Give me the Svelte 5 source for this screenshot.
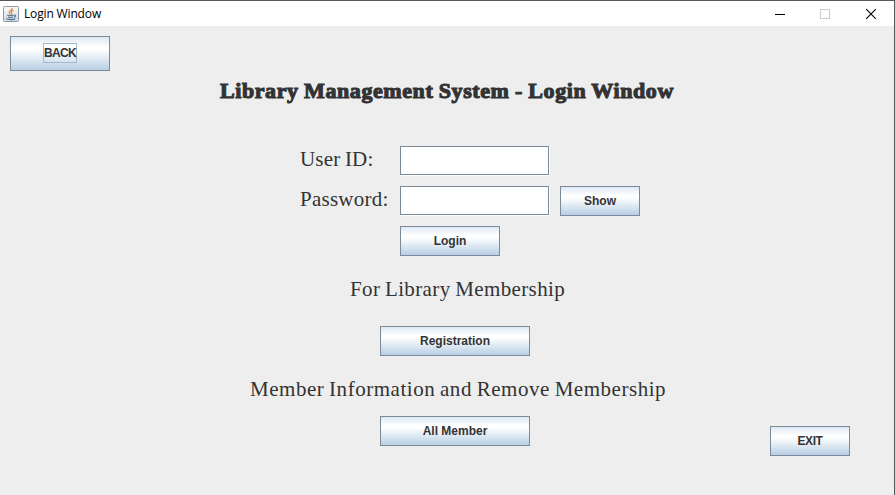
<script>
  let userId = $state('');
  let password = $state('');
  let shown = $state(false);
</script>

<div class="window">
  <header>
    <svg class="java" width="16" height="16" viewBox="0 0 16 16">
      <defs>
        <linearGradient id="plate" x1="0" y1="0" x2="0" y2="1">
          <stop offset="0" stop-color="#fafafa" />
          <stop offset="1" stop-color="#cfd8df" />
        </linearGradient>
      </defs>
      <rect x="0.5" y="0.5" width="15" height="15" rx="1" fill="url(#plate)" stroke="#8b9aa6" />
      <path d="M9.2 1.8C9.8 4 6 4.6 6.2 6.4C6.3 7.3 7.2 7.9 7.6 8.6M10.6 4.3C8.6 4.9 7.8 5.8 8.5 6.8C8.9 7.4 8.8 8 8.3 8.5" fill="none" stroke="#e8833a" stroke-width="1.2" />
      <path d="M4.2 9.2C5 10 9.5 9.9 10.6 9.2M5 11.1C6.2 11.7 8.6 11.7 9.8 11.1M11 9.1C13.2 8.7 13 10.8 10.9 11.3M3.2 12.6C4.6 13.9 10.4 13.9 12.2 12.7" fill="none" stroke="#4d7290" stroke-width="1.1" />
    </svg>
    <span class="caption">Login Window</span>
    <svg class="controls" width="102" height="12" viewBox="0 0 102 12" shape-rendering="crispEdges">
      <path d="M0 6.5H10" stroke="#000" />
      <rect x="45.5" y="1.5" width="9" height="9" fill="none" stroke="#ccc" />
      <path d="M91.2 1.2L100.8 10.8M100.8 1.2L91.2 10.8" stroke="#000" stroke-width="1.1" shape-rendering="auto" />
    </svg>
  </header>

  <main>
    <button class="back"><span>BACK</span></button>
    <h1>Library Management System - Login Window</h1>

    <form onsubmit={(e) => e.preventDefault()}>
      <label class="user" for="user">User ID:</label>
      <input id="user" type="text" bind:value={userId} />
      <label class="pass" for="pass">Password:</label>
      <input id="pass" type={shown ? 'text' : 'password'} bind:value={password} />
      <button type="button" class="show" onclick={() => (shown = !shown)}>Show</button>
      <button class="login">Login</button>
    </form>

    <p class="membership">For Library Membership</p>
    <button class="wide registration">Registration</button>
    <p class="information">Member Information and Remove Membership</p>
    <div class="bottom">
      <button class="wide">All Member</button>
      <button class="exit">EXIT</button>
    </div>
  </main>
</div>

<style>
  :global(body) {
    margin: 0;
  }
  .window {
    box-sizing: border-box;
    width: 895px;
    height: 495px;
    overflow: hidden;
    background: #eee;
    border-top: 1px solid #585858;
    border-right: 1px solid #585858;
    color: #333;
  }
  header {
    display: flex;
    align-items: center;
    height: 25px;
    padding: 0 17px 0 3px;
    background: #fff;
  }
  .caption {
    margin-left: 5px;
    font: 12px/20px 'Open Sans', 'Noto Sans', sans-serif;
    color: #000;
    letter-spacing: -0.15px;
  }
  .controls {
    margin-left: auto;
  }
  main {
    display: flex;
    flex-direction: column;
    align-items: flex-start;
    padding-top: 10px;
  }
  button {
    box-sizing: border-box;
    display: flex;
    align-items: center;
    justify-content: center;
    height: 30px;
    margin: 0;
    padding: 0;
    border: 1px solid #7a8a99;
    border-radius: 0;
    background: linear-gradient(#dde8f3 0%, #fff 30%, #fff 38%, #b8cfe5 100%);
    font: bold 12px/14px 'Liberation Sans', Arial, sans-serif;
    color: #333;
  }
  .back {
    width: 100px;
    height: 35px;
    margin-left: 10px;
  }
  .back span {
    box-sizing: border-box;
    width: 34px;
    height: 20px;
    margin-bottom: 1px;
    padding-top: 2px;
    border: 1px solid #a3b8cc;
    letter-spacing: -0.7px;
  }
  h1 {
    height: 30px;
    margin: 5px 0 0 220px;
    font: bold 22px/30px 'Liberation Serif', serif;
    letter-spacing: 0.58px;
    word-spacing: -0.6px;
    -webkit-text-stroke: 1.1px #333;
    white-space: nowrap;
  }
  form {
    display: grid;
    grid-template-columns: 100px 150px 90px;
    grid-template-rows: 30px 30px 30px;
    row-gap: 10px;
    margin: 40px 0 0 300px;
  }
  label,
  p {
    font: 21px/30px 'Liberation Serif', serif;
    letter-spacing: 0.38px;
    word-spacing: -1px;
    white-space: nowrap;
  }
  label {
    grid-column: 1;
    height: 30px;
    line-height: 27px;
  }
  .user {
    letter-spacing: 0.2px;
  }
  .pass {
    letter-spacing: 0.25px;
  }
  input {
    grid-column: 2;
    box-sizing: border-box;
    width: 149px;
    height: 29px;
    margin: 0;
    padding: 2px;
    border: 1px solid #7a8a99;
    border-radius: 0;
    outline: none;
    background: #fff;
    box-shadow: 1px 1px #fff;
  }
  .show {
    grid-column: 3;
    margin-left: 10px;
    width: 80px;
  }
  .login {
    grid-column: 2;
    width: 100px;
  }
  p {
    height: 30px;
    margin: 18px 0 0 350px;
  }
  .wide {
    width: 150px;
  }
  .registration {
    margin: 22px 0 0 380px;
  }
  .information {
    margin-left: 250px;
    letter-spacing: 0.53px;
  }
  .bottom {
    display: flex;
    margin: 12px 0 0 380px;
  }
  .exit {
    width: 80px;
    margin: 10px 0 0 240px;
    letter-spacing: -0.4px;
  }
</style>
